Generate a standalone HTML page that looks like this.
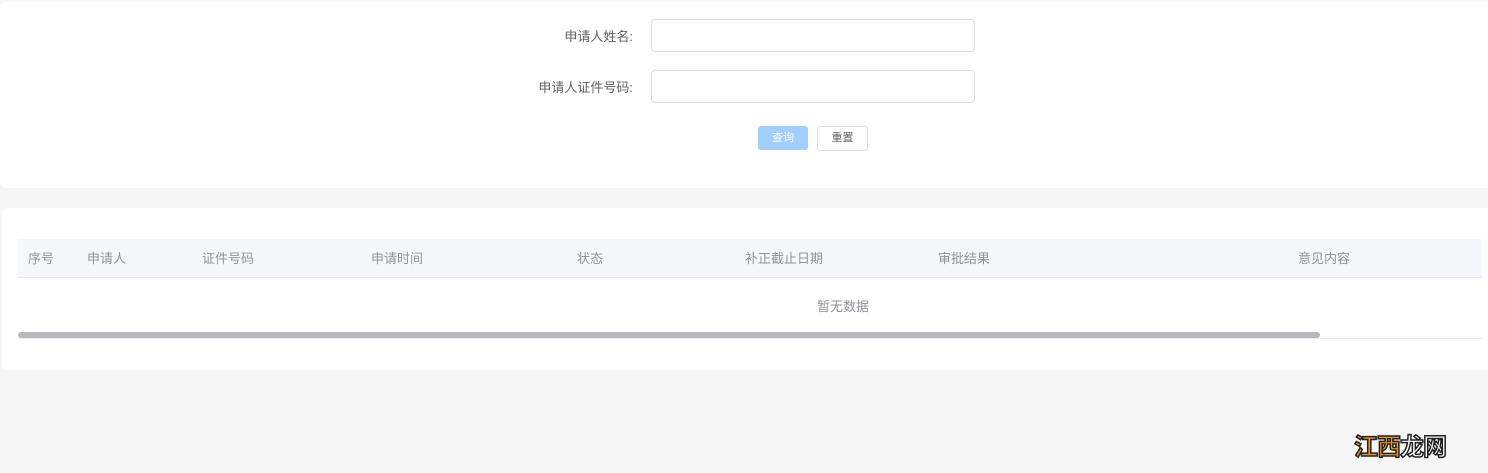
<!DOCTYPE html>
<html><head><meta charset="utf-8"><style>
body{margin:0;width:1488px;height:473px;background:#f6f6f6;font-family:"Liberation Sans","Noto Sans CJK SC",sans-serif;position:relative;overflow:hidden}
.card{position:absolute;background:#fff;border-radius:6px}
.lbl{position:absolute;font-size:13px;color:#606266;text-align:right;width:200px}
.inp{position:absolute;left:651px;width:322px;height:31px;border:1px solid #dcdfe6;border-radius:4px;background:#fff}
.th{position:absolute;top:248px;font-size:13px;color:#909399}
</style></head><body>
<div class="card" style="left:0;top:2px;width:1496px;height:186px"></div>
<div class="lbl" style="left:433px;top:26px">申请人姓名:</div>
<div class="inp" style="top:19px"></div>
<div class="lbl" style="left:433px;top:77px">申请人证件号码:</div>
<div class="inp" style="top:70px"></div>
<div style="position:absolute;left:758px;top:126px;width:50px;height:24px;background:#a0cfff;border-radius:3px;color:#fff;font-size:11px;text-align:center;line-height:24px">查询</div>
<div style="position:absolute;left:817px;top:126px;width:49px;height:23px;border:1px solid #dcdfe6;border-radius:3px;color:#606266;font-size:11px;text-align:center;line-height:23px">重置</div>

<div class="card" style="left:2px;top:208px;width:1494px;height:162px"></div>
<div style="position:absolute;left:18px;top:239px;width:1464px;height:38px;background:#f5f7fa;border-bottom:1px solid #e4e9f0"></div>
<div class="th" style="left:28px">序号</div>
<div class="th" style="left:87px">申请人</div>
<div class="th" style="left:202px">证件号码</div>
<div class="th" style="left:371px">申请时间</div>
<div class="th" style="left:577px">状态</div>
<div class="th" style="left:745px">补正截止日期</div>
<div class="th" style="left:938px">审批结果</div>
<div class="th" style="left:1298px">意见内容</div>
<div style="position:absolute;left:817px;top:296px;font-size:13px;color:#909399">暂无数据</div>
<div style="position:absolute;left:18px;top:338px;width:1464px;height:1px;background:#ebeef5"></div>
<div style="position:absolute;left:18px;top:332px;width:1302px;height:6px;background:#b8b9bd;border-radius:3px"></div>
<div style="position:absolute;left:1354px;top:427px;font-size:24px;font-weight:bold;color:#e8961e;-webkit-text-stroke:1.5px #222;letter-spacing:-1px">江西<span style="color:#fff">龙网</span></div>
</body></html>
